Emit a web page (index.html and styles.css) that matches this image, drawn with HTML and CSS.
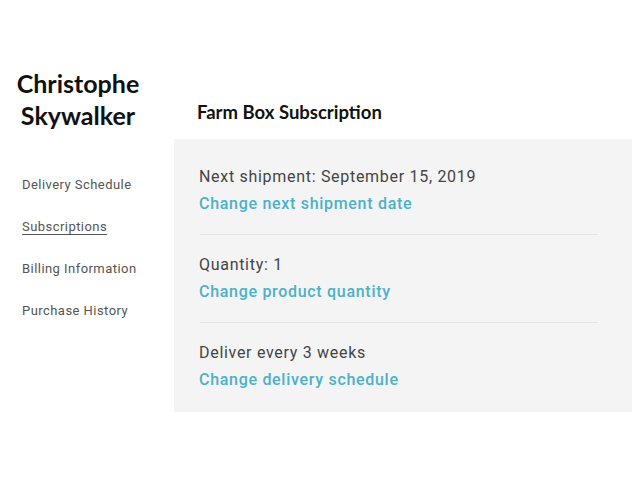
FILE: index.html
```html
<!DOCTYPE html>
<html>
<head>
<meta charset="utf-8">
<link rel="stylesheet" href="styles.css">
</head>
<body>
<div class="page">
  <aside class="sidebar">
    <h1 class="name">Christophe<br>Skywalker</h1>
    <nav class="nav">
      <a class="nav-link">Delivery Schedule</a>
      <a class="nav-link active">Subscriptions</a>
      <a class="nav-link">Billing Information</a>
      <a class="nav-link">Purchase History</a>
    </nav>
  </aside>
  <main class="main">
    <h2 class="title">Farm Box Subscription</h2>
    <section class="panel">
      <div class="item">
        <div class="label">Next shipment: September 15, 2019</div>
        <a class="action">Change next shipment date</a>
      </div>
      <hr class="divider">
      <div class="item">
        <div class="label">Quantity: 1</div>
        <a class="action">Change product quantity</a>
      </div>
      <hr class="divider">
      <div class="item">
        <div class="label">Deliver every 3 weeks</div>
        <a class="action">Change delivery schedule</a>
      </div>
    </section>
  </main>
</div>
</body>
</html>
```
FILE: styles.css
```css
html, body {
  margin: 0;
  padding: 0;
  background: #ffffff;
}
.page {
  display: flex;
  width: 640px;
  height: 480px;
}
.sidebar {
  width: 174px;
  flex: none;
  padding-top: 67px;
  box-sizing: border-box;
}
.name {
  width: 156px;
  margin: 0;
  text-align: center;
  font-family: Lato, "Open Sans", sans-serif;
  font-weight: 700;
  font-size: 25px;
  line-height: 32px;
  color: #111;
}
.nav {
  display: flex;
  flex-direction: column;
  gap: 22px;
  padding-left: 22px;
  margin-top: 44px;
}
.nav-link {
  font-family: Roboto, sans-serif;
  font-size: 13px;
  line-height: 20px;
  color: #555;
  letter-spacing: 0.45px;
}
.nav-link.active {
  text-decoration: underline;
  text-underline-offset: 3px;
}
.main {
  width: 458px;
  flex: none;
  padding-top: 100px;
}
.title {
  margin: 0 0 15px 23px;
  font-family: Lato, "Open Sans", sans-serif;
  font-weight: 700;
  font-size: 18.5px;
  line-height: 24px;
  color: #111;
}
.panel {
  background: #f4f4f5;
  padding: 24px 35px 19px 25px;
  display: flex;
  flex-direction: column;
}
.item {
  display: flex;
  flex-direction: column;
}
.label {
  font-family: Roboto, sans-serif;
  font-size: 16px;
  line-height: 27px;
  color: #444;
  letter-spacing: 0.7px;
}
.action {
  font-family: Roboto, sans-serif;
  font-weight: 500;
  font-size: 16px;
  line-height: 27px;
  color: #4db1c9;
  letter-spacing: 0.7px;
}
.divider {
  border: 0;
  height: 1px;
  background: #e4e4e6;
  margin: 17px 0 16px 1px;
}
```
